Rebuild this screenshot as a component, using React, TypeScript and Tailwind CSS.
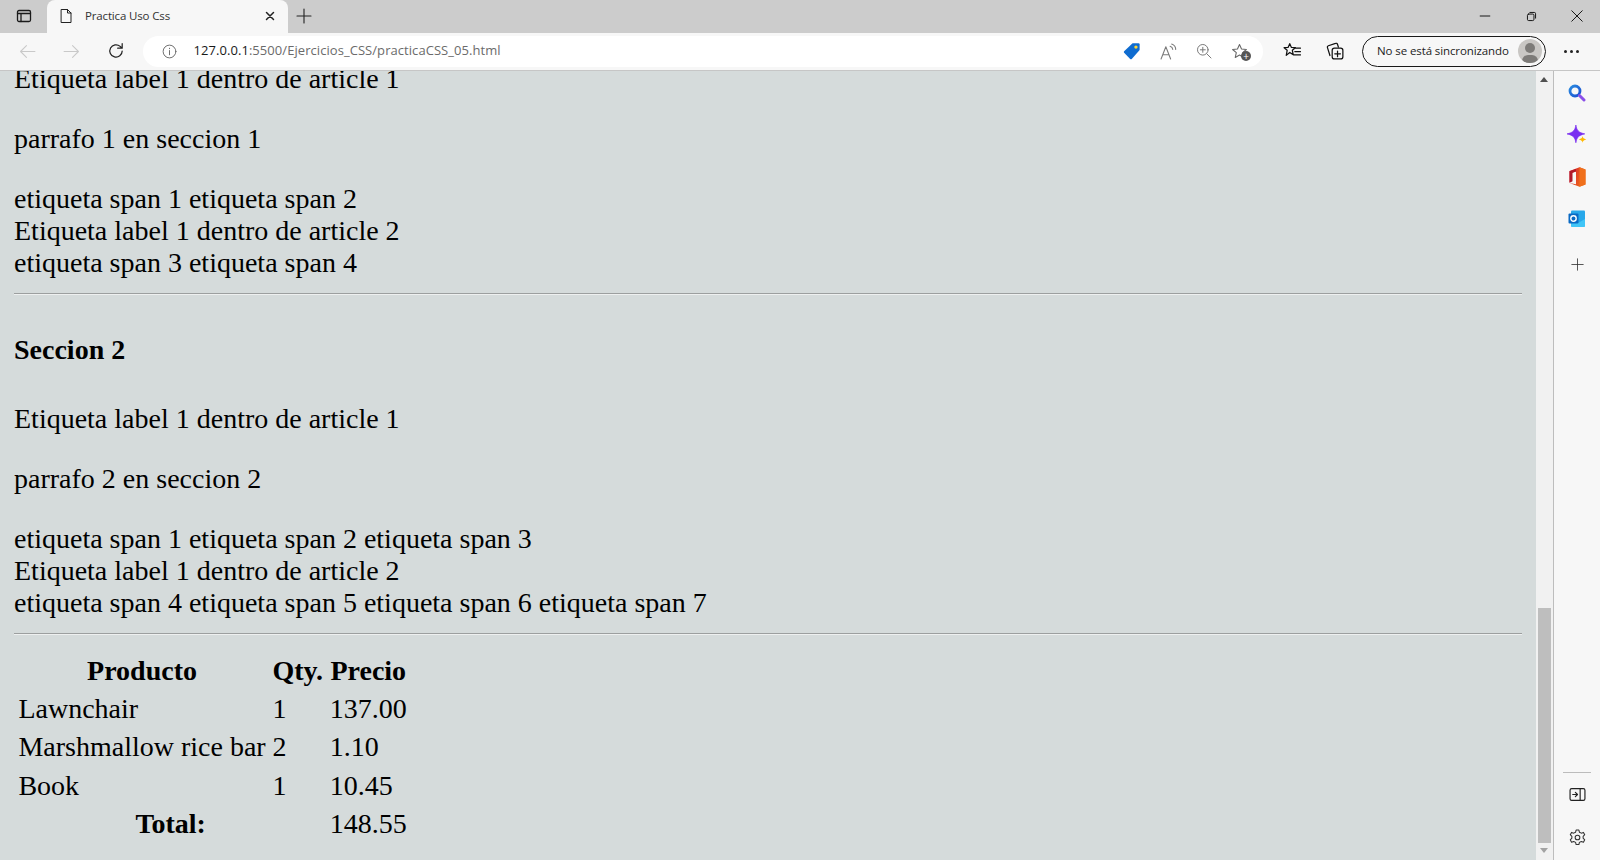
import type { ReactNode } from "react";

const rows = [
  ["Lawnchair", "1", "137.00"],
  ["Marshmallow rice bar", "2", "1.10"],
  ["Book", "1", "10.45"],
];

const Stroke = ({ size = 16, color = "#333", width = 1.1, children }: { size?: number; color?: string; width?: number; children: ReactNode }) => (
  <svg width={size} height={size} viewBox="0 0 16 16" fill="none" stroke={color} strokeWidth={width} strokeLinecap="round" strokeLinejoin="round">
    {children}
  </svg>
);

const TabBar = () => (
  <div className="flex h-[33px] shrink-0 items-end bg-[#cccccc]">
    <div className="flex h-full w-[47px] items-center justify-center pb-px">
      <Stroke size={16} color="#1a1a1a" width={1.3}>
        <rect x="1.5" y="2.5" width="13" height="11" rx="1.5" />
        <path d="M1.5 5.5h13M5 5.5v8" />
      </Stroke>
    </div>
    <div className="flex h-full w-[241px] items-center rounded-t-lg bg-[#f7f7f7] pb-px pl-[11px] pr-[10px]">
      <Stroke size={16} color="#222" width={1}>
        <path d="M3.5 1.5h6l3.5 3.5v9.5h-9.5zM9.5 1.5v3.5h3.5" />
      </Stroke>
      <span className="ml-[11px] flex-1 text-[11.5px] tracking-[-0.15px] text-[#333]">Practica Uso Css</span>
      <Stroke size={16} color="#222" width={1.5}>
        <path d="M4.5 4.5l7 7M11.5 4.5l-7 7" />
      </Stroke>
    </div>
    <div className="flex h-full w-[32px] items-center justify-center pb-px">
      <Stroke size={16} color="#222" width={1.1}>
        <path d="M8 1v14M1 8h14" />
      </Stroke>
    </div>
    <div className="flex-1" />
    <div className="flex h-full w-[46px] items-center justify-center pb-px">
      <Stroke size={14} color="#111" width={1.1}>
        <path d="M2.500 8h11" />
      </Stroke>
    </div>
    <div className="flex h-full w-[46px] items-center justify-center pb-px">
      <Stroke size={13} color="#111" width={1.2}>
        <rect x="3" y="5" width="8" height="8" rx="1.5" />
        <path d="M6 3h5.500A1.500 1.500 0 0 1 13 4.500V10" />
      </Stroke>
    </div>
    <div className="flex h-full w-[46px] items-center justify-center pb-px">
      <Stroke size={14} color="#111" width={1.1}>
        <path d="M2 2l12 12M14 2L2 14" />
      </Stroke>
    </div>
  </div>
);

const ToolSlot = ({ children }: { children: ReactNode }) => (
  <div className="flex h-full w-[44px] items-center justify-center">{children}</div>
);

const PillIcon = ({ children }: { children: ReactNode }) => (
  <div className="flex h-full w-9 items-center justify-center">{children}</div>
);

const ToolBar = () => (
  <div className="flex h-[38px] shrink-0 items-center border-b border-[#c6c6c6] bg-[#f7f7f7] pb-px pl-[5.5px]">
    <ToolSlot>
      <Stroke size={17} color="#c9c9c9" width={1}>
        <path d="M15 8H1.500M7 2.500L1.500 8 7 13.500" />
      </Stroke>
    </ToolSlot>
    <ToolSlot>
      <Stroke size={17} color="#c9c9c9" width={1}>
        <path d="M1 8h13.500M9 2.500L14.500 8 9 13.500" />
      </Stroke>
    </ToolSlot>
    <ToolSlot>
      <Stroke size={18} color="#222" width={1.1}>
        <path d="M13.500 8A5.500 5.500 0 1 1 11.700 3.900L13.500 5.500M13.500 1.500v4h-4" />
      </Stroke>
    </ToolSlot>
    <div className="ml-[5.5px] flex h-[31px] w-[1120px] items-center rounded-full bg-white pl-[18.5px]">
      <Stroke size={15} color="#666" width={1}>
        <circle cx="8" cy="8" r="6.800" />
        <path d="M8 7v4.500M8 4.500v.5" />
      </Stroke>
      <div className="ml-[17px] flex-1 text-[13px] tracking-[0.06px]">
        <span className="text-[#1a1a1a]">127.0.0.1</span>
        <span className="text-[#6b6b6b]">:5500/Ejercicios_CSS/practicaCSS_05.html</span>
      </div>
      <PillIcon>
        <svg width="18" height="18" viewBox="0 0 16 16">
          <path d="M8.500 1.200h5.300a1 1 0 0 1 1 1v5L7.800 15a1 1 0 0 1-1.400 0L1 9.600a1 1 0 0 1 0-1.400z" fill="#0f6cd0" />
          <circle cx="11.500" cy="4.500" r="1.500" fill="#ffd633" />
        </svg>
      </PillIcon>
      <PillIcon>
        <Stroke size={17} color="#7a7a7a" width={1}>
          <path d="M1 15L5.500 3.500 10 15M2.800 11h5.400M9.500 3a3.500 3.500 0 0 1 2.500 3M11 1a5.500 5.500 0 0 1 3.800 5" />
        </Stroke>
      </PillIcon>
      <PillIcon>
        <Stroke size={16} color="#7a7a7a" width={1}>
          <circle cx="6.800" cy="6.800" r="5.300" />
          <path d="M10.800 10.800L15 15M6.800 4.300v5M4.300 6.800h5" />
        </Stroke>
      </PillIcon>
      <div className="relative flex h-full w-[34px] items-center justify-center">
        <Stroke size={17} color="#666" width={1}>
          <path d="M8 1.500l1.900 4.200 4.600.4-3.500 3 1 4.500L8 11.300 4 13.600l1-4.500-3.500-3 4.600-.4z" />
        </Stroke>
        <span className="absolute left-[19px] top-[15px] flex h-[10px] w-[10px] items-center justify-center rounded-full bg-[#555] text-[10px] leading-none text-white">+</span>
      </div>
      <div className="w-[7px]" />
    </div>
    <div className="flex h-full w-[56px] items-center justify-center pl-[1px]">
      <Stroke size={18} color="#111" width={1.1}>
        <path d="M6 1.500l1.500 3.300 3.500.3-2.700 2.300.8 3.800-3.100-1.900-3.100 2.600.8-4.500L1 5.100l3.500-.3zM11.500 5.500h4M10.500 8.500h5M9.500 11.500h6" />
      </Stroke>
    </div>
    <div className="flex h-full w-[32px] items-center justify-center">
      <Stroke size={18} color="#111" width={1.1}>
        <rect x="5.500" y="5.500" width="9.500" height="9.500" rx="2" />
        <path d="M10.250 8v5M7.800 10.500h5M3.500 12L1.300 5a1.300 1.300 0 0 1 .8-1.700L8.500 1.200a1.300 1.300 0 0 1 1.700.8l.8 2.500" />
      </Stroke>
    </div>
    <div className="ml-[11px] flex h-[31px] w-[184px] items-center rounded-full border border-[#1a1a1a] pl-[14px] pr-[3px]">
      <span className="flex-1 whitespace-nowrap text-[11.5px] tracking-[-0.1px] text-[#222]">No se está sincronizando</span>
      <div className="relative h-[24px] w-[24px] overflow-hidden rounded-full bg-[#c9c7c4]">
        <div className="absolute left-[7px] top-[4px] h-[10px] w-[10px] rounded-full bg-[#7d7b78]" />
        <div className="absolute left-[4px] top-[16px] h-[12px] w-[16px] rounded-full bg-[#7d7b78]" />
      </div>
    </div>
    <div className="flex h-full flex-1 items-center justify-center gap-[3px] pr-[8px] pl-[5px]">
      <div className="h-[3px] w-[3px] rounded-full bg-[#222]" />
      <div className="h-[3px] w-[3px] rounded-full bg-[#222]" />
      <div className="h-[3px] w-[3px] rounded-full bg-[#222]" />
    </div>
  </div>
);

const Rule = () => <hr className="my-[14px] h-[2px] border-t border-b border-t-[#9c9f9f] border-b-[#eef0f0]" />;

const cell = "px-[2.4px] py-[2.17px]";

const Page = () => (
  <div className="h-full min-w-0 flex-1 overflow-hidden bg-[#d5dbdb] px-[14px] font-['Liberation_Serif',serif] text-[28px] leading-[32px] text-black">
    <div className="-mt-[8px]">Etiqueta label 1 dentro de article 1</div>
    <p className="my-[28px]">parrafo 1 en seccion 1</p>
    <div>etiqueta span 1 etiqueta span 2</div>
    <div>Etiqueta label 1 dentro de article 2</div>
    <div>etiqueta span 3 etiqueta span 4</div>
    <Rule />
    <h4 className="mt-[39px] mb-[36.5px] text-[28px] font-bold">Seccion 2</h4>
    <div>Etiqueta label 1 dentro de article 1</div>
    <p className="my-[28px]">parrafo 2 en seccion 2</p>
    <div>etiqueta span 1 etiqueta span 2 etiqueta span 3</div>
    <div>Etiqueta label 1 dentro de article 2</div>
    <div>etiqueta span 4 etiqueta span 5 etiqueta span 6 etiqueta span 7</div>
    <Rule />
    <table className="mt-[16px] border-separate border-spacing-[2px]">
      <thead>
        <tr>
          <th className={cell + " text-center font-bold"}>Producto</th>
          <th className={cell + " text-center font-bold"}>Qty.</th>
          <th className={cell + " text-center font-bold"}>Precio</th>
        </tr>
      </thead>
      <tbody>
        {rows.map((r) => (
          <tr key={r[0]}>
            <td className={cell}>{r[0]}</td>
            <td className={cell}>{r[1]}</td>
            <td className={cell}>{r[2]}</td>
          </tr>
        ))}
        <tr>
          <th colSpan={2} className={cell + " text-center font-bold"}>Total:</th>
          <td className={cell}>148.55</td>
        </tr>
      </tbody>
    </table>
  </div>
);

const ScrollBar = () => (
  <div className="flex h-full w-[18px] shrink-0 flex-col items-center border-r border-[#bdbdbd] bg-[#f1f1f1] pr-px">
    <div className="mt-[6px] h-0 w-0 border-x-[4px] border-b-[5px] border-x-transparent border-b-[#505050]" />
    <div className="mt-[526px] h-[235px] w-[13px] bg-[#bebebe]" />
    <div className="mt-[5px] h-0 w-0 border-x-[4px] border-t-[5px] border-x-transparent border-t-[#a3a3a3]" />
  </div>
);

const SideBar = () => (
  <div className="flex h-full w-[46px] shrink-0 flex-col items-center bg-[#f7f7f7] pt-[13px]">
    <svg width="18" height="18" viewBox="0 0 18 18" fill="none">
      <defs>
        <linearGradient id="lens" x1="0" y1="0" x2="1" y2="1">
          <stop offset="0" stopColor="#2a8be0" />
          <stop offset="1" stopColor="#1a4fd0" />
        </linearGradient>
      </defs>
      <circle cx="7" cy="7" r="5" stroke="url(#lens)" strokeWidth="2.800" />
      <path d="M11.500 11.500l4.500 4.500" stroke="#8a4fe8" strokeWidth="3" strokeLinecap="round" />
    </svg>
    <svg className="mt-[23px]" width="20" height="20" viewBox="0 0 18 18">
      <path d="M8 0C8.800 5 10.500 6.800 16 8 10.500 9.200 8.800 11 8 16 7.200 11 5.500 9.200 0 8 5.500 6.800 7.200 5 8 0z" fill="#7a2ff0" stroke="#7a2ff0" strokeWidth="0.600" strokeLinejoin="round" />
      <path d="M14 10c.3 1.700 1 2.400 3.400 3-2.400.6-3.100 1.300-3.400 3-.3-1.700-1-2.400-3.400-3 2.400-.6 3.100-1.300 3.400-3z" fill="#ffb900" />
    </svg>
    <svg className="mt-[22px]" width="17" height="20" viewBox="0 0 17 20">
      <defs>
        <linearGradient id="officeTop" x1="0" y1="0" x2="1" y2="0.400">
          <stop offset="0" stopColor="#d4132c" />
          <stop offset="1" stopColor="#f0701c" />
        </linearGradient>
      </defs>
      <path d="M0.500 4L10.500 .3 16.500 2.500v15l-6 2.200-10-3.700 6.500 1.200V4.500L2.500 6V14.500L.5 15.500z" fill="url(#officeTop)" />
      <path d="M0.500 4.200L7 2V4.500L3.500 5.800V14.200L.5 15.800z" fill="#b0182c" />
      <path d="M10.500 .3l6 2.200v15l-6 2.200z" fill="#f0701c" />
    </svg>
    <svg className="mt-[23px]" width="18" height="18" viewBox="0 0 18 18">
      <rect x="3" y="0.500" width="14" height="16.500" rx="1" fill="#28a8ea" />
      <path d="M3 9l7 4 7-4v8H3z" fill="#50d9ff" opacity="0.600" />
      <rect x="0.500" y="3.500" width="10" height="10" rx="1" fill="#0a6ac4" />
      <circle cx="5.500" cy="8.500" r="2.700" fill="none" stroke="#fff" strokeWidth="1.400" />
    </svg>
    <div className="mt-[30px]">
      <Stroke size={13} color="#333" width={1}>
        <path d="M8 1v14M1 8h14" />
      </Stroke>
    </div>
    <div className="mt-[501px] h-px w-[28px] bg-[#bcbcbc]" />
    <div className="mt-[13px]">
      <Stroke size={17} color="#222" width={1.1}>
        <rect x="1" y="2.500" width="14" height="11" rx="1.500" />
        <path d="M10.500 2.500v11M3.500 8h4.500M6 6l2 2-2 2" />
      </Stroke>
    </div>
    <div className="mt-[26px]">
      <Stroke size={17} color="#333" width={1}>
        <circle cx="8" cy="8" r="2.200" />
        <path d="M6.700 1h2.600l.5 2 1.800.9 2-.7 1.200 2.200-1.500 1.500v1.800l1.500 1.500-1.200 2.200-2-.7-1.800.9-.5 2H6.700l-.5-2-1.800-.9-2 .7L1.200 10.200l1.500-1.500V6.900L1.200 5.400l1.200-2.200 2 .7 1.800-.9z" />
      </Stroke>
    </div>
  </div>
);

export default function App() {
  return (
    <div className="flex h-[860px] w-[1600px] flex-col overflow-hidden font-['Open_Sans',sans-serif]">
      <TabBar />
      <ToolBar />
      <div className="flex min-h-0 flex-1">
        <Page />
        <ScrollBar />
        <SideBar />
      </div>
    </div>
  );
}
